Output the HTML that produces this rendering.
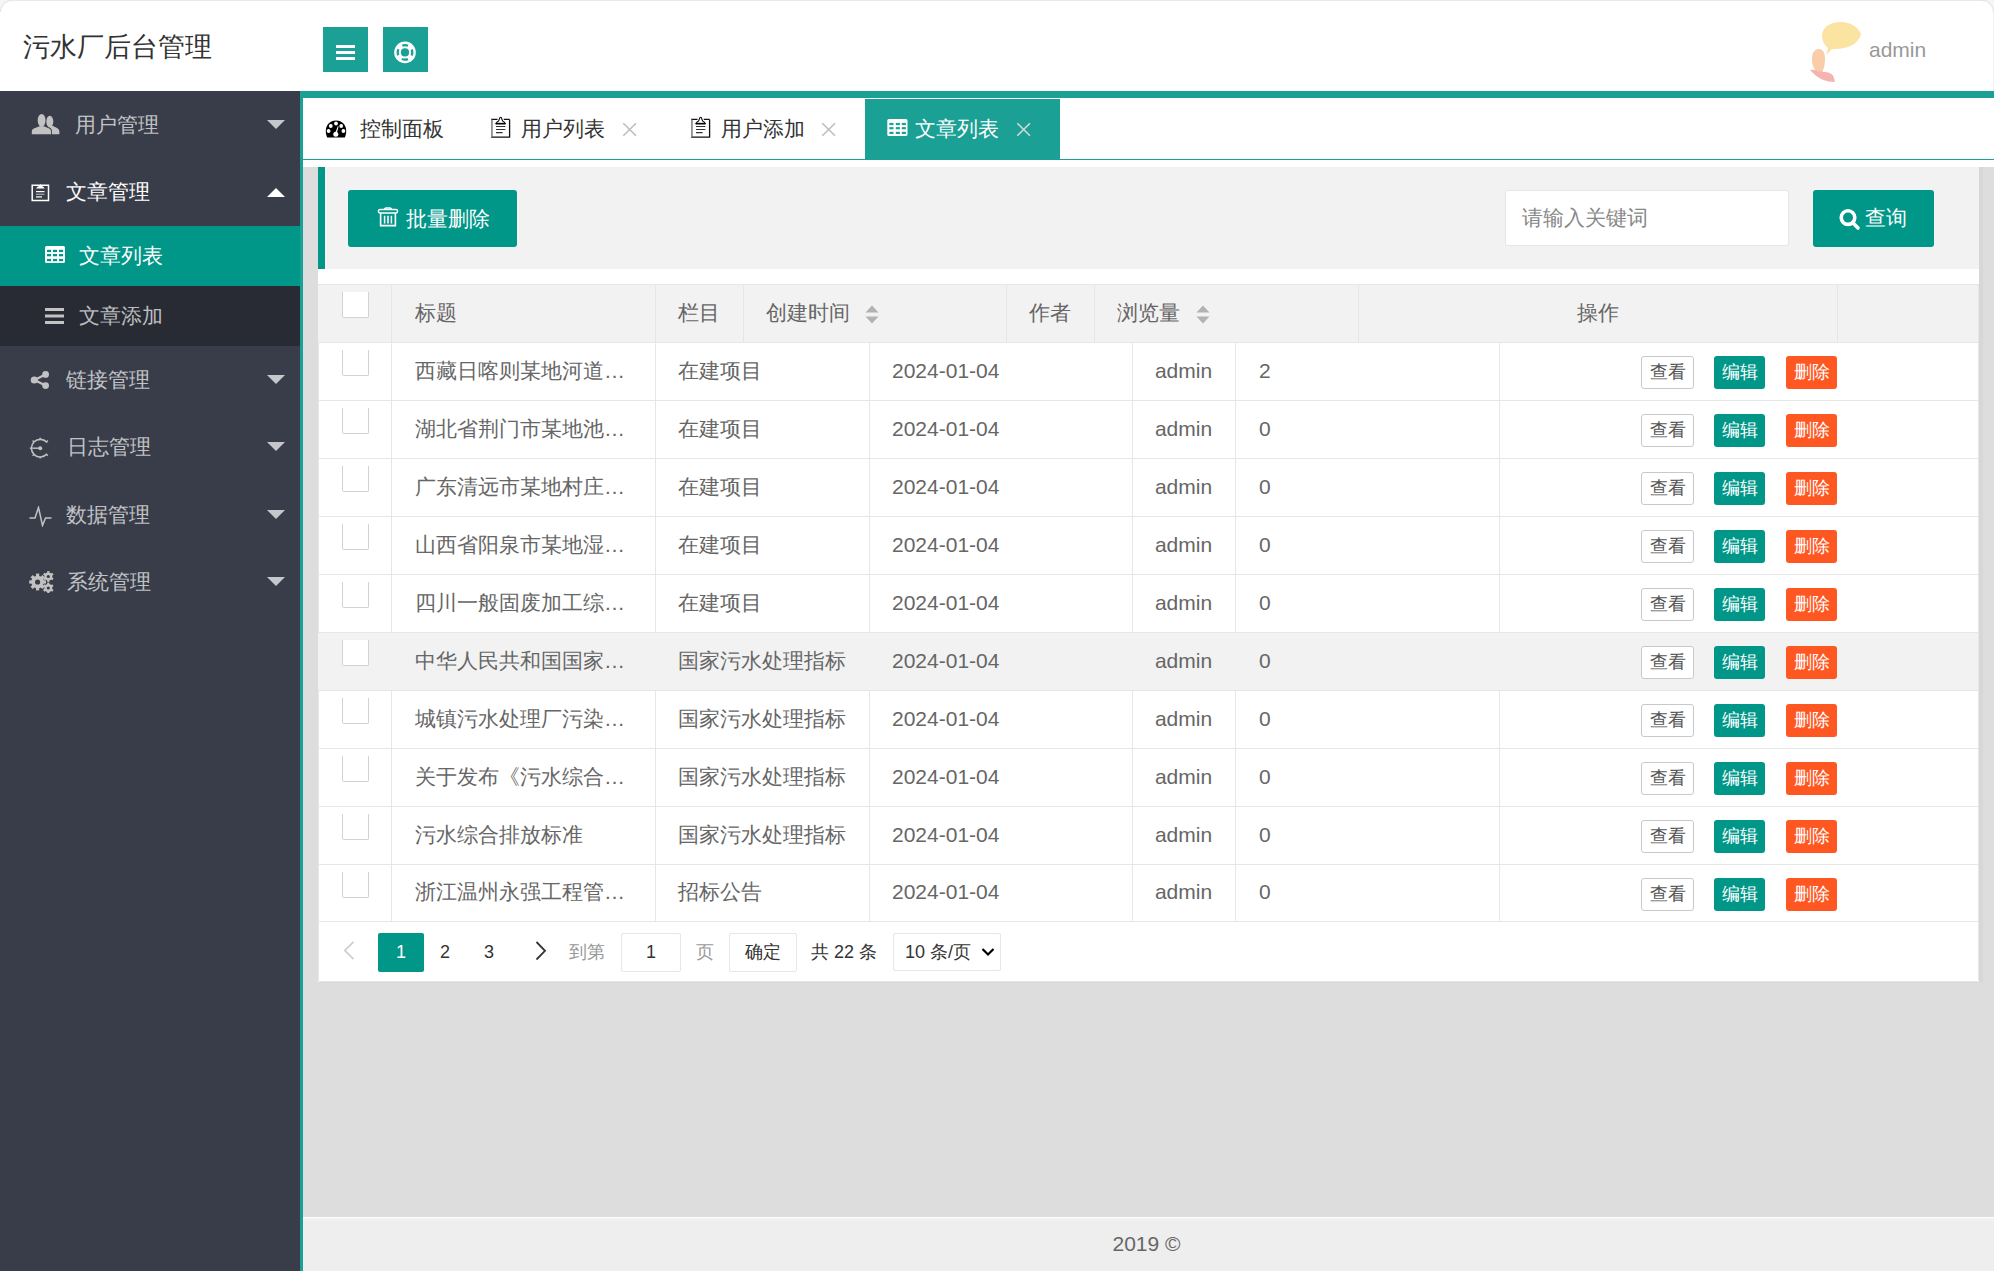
<!DOCTYPE html>
<html><head><meta charset="utf-8"><title>污水厂后台管理</title>
<style>
*{box-sizing:border-box;margin:0;padding:0}
html,body{width:1994px;height:1271px;overflow:hidden}
body{position:relative;background:#fff;font-family:"Liberation Sans",sans-serif;color:#666;font-size:21px}
.abs{position:absolute}
svg{display:block}
/* header */
#hd{left:0;top:0;width:1994px;height:91px;background:#fff}
#logo{left:23px;top:27px;font-size:27px;color:#333;line-height:40px;white-space:nowrap}
.hbtn{top:27px;width:45px;height:45px;background:#1AA094}
#admin{left:1869px;top:35px;font-size:21px;line-height:30px;color:#999}
/* side */
#side{left:0;top:91px;width:300px;height:1180px;background:#393D49}
.nv{position:absolute;left:0;width:300px;height:68px;color:rgba(255,255,255,.7);font-size:21px}
.nv .t{position:absolute;left:66px;top:0;line-height:68px;white-space:nowrap}
.nv .ic{position:absolute}
.nv .ar{position:absolute;left:267px;top:29px;width:0;height:0;border-left:9px solid transparent;border-right:9px solid transparent;border-top:9px solid #c6c7cc}
.nv .ar.up{border-top:0;border-bottom:9px solid #fff;top:30px}
/* main */
#main{left:300px;top:91px;width:1694px;height:1180px;background:#fff}
#tbar{left:300px;top:91px;width:1694px;height:7px;background:#1AA094}
#lbar{left:300px;top:91px;width:3px;height:1180px;background:#1AA094}
#tline{left:303px;top:159px;width:1691px;height:1px;background:#1AA094}
.tab{top:99px;height:60px;line-height:60px;font-size:21px;color:#333;white-space:nowrap}
.tab .x{position:absolute;top:0;color:#c2c2c2;font-size:20px}
#gray{left:303px;top:167px;width:1691px;height:1050px;background:#dddddd}
#foot{left:303px;top:1217px;width:1691px;height:54px;background:#eeeeee;border-top:1px solid #fff;box-shadow:inset 0 3px 0 #f2f2f2}
#foot span{position:absolute;left:-2px;width:100%;text-align:center;top:14px;line-height:24px;font-size:21px;color:#666}
#quote{left:318px;top:167px;width:1661px;height:102px;background:#f2f2f2;border-left:7px solid #009688}
#white{left:318px;top:269px;width:1661px;height:713px;background:#fff}
#tview{left:318px;top:284px;width:1661px;height:698px;border:1px solid #e6e6e6;border-top:0;border-radius:0 0 2px 2px}
.btn{background:#009688;color:#fff;border-radius:3px;white-space:nowrap}
#inp{left:1505px;top:190px;width:284px;height:56px;background:#fff;border:1px solid #e6e6e6;border-radius:3px}
#inp span{position:absolute;left:16px;top:0;line-height:54px;color:#888;font-size:21px}
/* table */
#thead{left:318px;top:284px;width:1660px;height:59px;background:#f2f2f2;border-top:1px solid #e6e6e6;border-bottom:1px solid #e6e6e6}
.vl{position:absolute;width:1px;background:#e6e6e6}
.hl{position:absolute;left:318px;width:1660px;height:1px;background:#e6e6e6}
.cell{position:absolute;line-height:58px;font-size:21px;color:#666;white-space:nowrap}
.cb{position:absolute;left:342px;width:27px;height:26px;background:#fff;border:1px solid #d2d2d2;border-top:0;border-radius:0 0 2px 2px}
.xs{position:absolute;height:33px;line-height:31px;font-size:18px;border-radius:3px;text-align:center;white-space:nowrap}
.xs.v{left:1641px;width:53px;background:#fff;border:1px solid #c9c9c9;color:#555}
.xs.e{left:1714px;width:51px;background:#009688;color:#fff;line-height:33px}
.xs.d{left:1786px;width:51px;background:#FF5722;color:#fff;line-height:33px}
.pg{position:absolute;top:933px;height:38px;line-height:38px;font-size:18px;white-space:nowrap;color:#333}
</style></head>
<body>
<div id="hd" class="abs"></div>
<div id="logo" class="abs">污水厂后台管理</div>
<div class="abs hbtn" style="left:323px">
 <svg width="45" height="45"><rect x="13" y="18" width="19" height="3" fill="#fff"/><rect x="13" y="24" width="19" height="3" fill="#fff"/><rect x="13" y="30" width="19" height="3" fill="#fff"/></svg>
</div>
<div class="abs hbtn" style="left:383px">
 <svg width="45" height="45"><circle cx="22" cy="25.4" r="10.8" fill="#fff"/><circle cx="22" cy="25.4" r="7.3" fill="none" stroke="#1AA094" stroke-width="2.3" stroke-dasharray="6.2 5.27" stroke-dashoffset="3.1" transform="rotate(-90 22 25.4)"/><circle cx="22" cy="25.4" r="4.1" fill="#1AA094"/></svg>
</div>
<div class="abs" style="left:1806px;top:18px">
 <svg width="60" height="68" viewBox="0 0 60 68"><path d="M16 18 C16 8 26 4 35 4 C45 4 52 9 55 16 C54 21 50 26 42 29 C35 31 30 31 26 31 L20 37 L22 30 C18 27 16 23 16 18Z" fill="#fbe3a1"/><path d="M6 41 C6 33 10 31 13 31 C17 31 19 35 19 41 C19 46 18 50 17 52 L17 56 L9 56 L9 52 C7 49 6 45 6 41Z" fill="#f9ccaa"/><path d="M4 52 C8 51 12 54 17 54 C22 54 27 55 28 60 L29 64 C20 64 12 61 4 52Z" fill="#f4b4b0"/></svg>
</div>
<div id="admin" class="abs">admin</div>

<div id="side" class="abs"></div>
<!-- nav items -->
<div class="nv" style="top:91px">
 <svg class="ic" style="left:31px;top:22px" width="30" height="22" viewBox="0 0 30 22"><g fill="#c2c2c2"><ellipse cx="18.8" cy="8.6" rx="3.5" ry="5.8"/><path d="M20.6 21.2 V17.6 Q20.6 15.8 18.6 15 L17.4 14.3 L19.6 13 H22 L25.6 14.8 Q28.4 15.8 28.4 18.6 V21.2 Z"/></g><path d="M20.2 21.5 V17.6 Q20.2 15.2 17.5 14.4" fill="none" stroke="#393D49" stroke-width="1"/><g fill="#c2c2c2"><ellipse cx="10.6" cy="7.4" rx="3.9" ry="6.4"/><path d="M0.8 21.2 V18.6 Q0.9 15.6 4.2 14.9 L8.4 13.2 H12.8 L17 14.9 Q19.9 15.6 20 18.6 V21.2 Z"/></g></svg>
 <span class="t" style="left:75px">用户管理</span>
 <span class="ar"></span>
</div>
<div class="nv" style="top:158px;color:#fff">
 <svg class="ic" style="left:31px;top:25px" width="19" height="19" viewBox="0 0 19 19"><path d="M1.2 2.2 H17.5 V17.6 H1.2 Z" fill="none" stroke="#fff" stroke-width="1.5"/><path d="M5 5.5 L7 3.2 H8.2 L9.4 1 L10.6 3.2 H11.8 L13.8 5.5Z" fill="#fff"/><rect x="5" y="8" width="8.5" height="1.2" fill="#fff"/><rect x="5" y="10.7" width="8.5" height="1.2" fill="#aaa"/><rect x="5" y="13.3" width="6" height="1.2" fill="#fff"/></svg>
 <span class="t">文章管理</span>
 <span class="ar up"></span>
</div>
<div class="nv" style="top:226px;height:60px;background:#009688;color:#fff">
 <svg class="ic" style="left:45px;top:20px" width="20" height="18" viewBox="0 0 20 18"><rect x="0" y="0" width="20" height="17" rx="1.6" fill="#fff"/><g fill="#009688"><rect x="2" y="3.8" width="4.1" height="2.3"/><rect x="8" y="3.8" width="4.1" height="2.3"/><rect x="14" y="3.8" width="4.1" height="2.3"/><rect x="2" y="8.0" width="4.1" height="2.3"/><rect x="8" y="8.0" width="4.1" height="2.3"/><rect x="14" y="8.0" width="4.1" height="2.3"/><rect x="2" y="12.9" width="4.1" height="2.3"/><rect x="8" y="12.9" width="4.1" height="2.3"/><rect x="14" y="12.9" width="4.1" height="2.3"/></g></svg>
 <span class="t" style="left:79px;line-height:60px">文章列表</span>
</div>
<div class="nv" style="top:286px;height:60px;background:#282B33">
 <svg class="ic" style="left:45px;top:21px" width="19" height="18" viewBox="0 0 19 18"><rect x="0" y="1" width="19" height="3" fill="#c2c2c2"/><rect x="0" y="7.5" width="19" height="3" fill="#c2c2c2"/><rect x="0" y="14" width="19" height="3" fill="#c2c2c2"/></svg>
 <span class="t" style="left:79px;line-height:60px">文章添加</span>
</div>
<div class="nv" style="top:346px">
 <svg class="ic" style="left:29px;top:24px" width="22" height="20" viewBox="0 0 22 20"><path d="M5.5 10 L16.5 4.5 M5.5 10 L16.5 15.5" stroke="#c2c2c2" stroke-width="2.4"/><circle cx="5.3" cy="10" r="3.6" fill="#c2c2c2"/><circle cx="16.6" cy="4.4" r="3.4" fill="#c2c2c2"/><circle cx="16.6" cy="15.6" r="3.4" fill="#c2c2c2"/></svg>
 <span class="t">链接管理</span>
 <span class="ar"></span>
</div>
<div class="nv" style="top:413px">
 <svg class="ic" style="left:29px;top:24px" width="23" height="23" viewBox="0 0 23 23"><path d="M18 5.6 A8.8 8.8 0 1 0 18 16.8" fill="none" stroke="#c2c2c2" stroke-width="1.6"/><circle cx="11.2" cy="11.2" r="2" fill="#c2c2c2"/><path d="M3.2 11.2 H11" stroke="#c2c2c2" stroke-width="1.4"/><g stroke="#c2c2c2" stroke-width="1.4"><path d="M11.2 0.8 V2.6"/><path d="M11.2 19.8 V21.6"/><path d="M3.6 3.6 L4.9 4.9"/><path d="M3.6 18.8 L4.9 17.5"/><path d="M0.8 11.2 H2.6"/><path d="M18.8 3.6 L17.5 4.9"/><path d="M18.8 18.8 L17.5 17.5"/></g></svg>
 <span class="t" style="left:67px">日志管理</span>
 <span class="ar"></span>
</div>
<div class="nv" style="top:481px">
 <svg class="ic" style="left:29px;top:25px" width="23" height="21" viewBox="0 0 23 21"><path d="M0.5 12 H6 L9.5 1.5 L13.5 19.5 L16.5 12 H22.5" fill="none" stroke="#c2c2c2" stroke-width="1.5" stroke-linejoin="miter"/></svg>
 <span class="t">数据管理</span>
 <span class="ar"></span>
</div>
<div class="nv" style="top:548px">
 <svg class="ic" style="left:29px;top:21px" width="25" height="24" viewBox="0 0 25 24"><g fill="#c2c2c2"><circle cx="8.6" cy="13" r="6.3"/><g transform="translate(8.6 13)"><rect x="-1.6" y="-8.4" width="3.2" height="16.8"/><rect x="-1.6" y="-8.4" width="3.2" height="16.8" transform="rotate(45)"/><rect x="-1.6" y="-8.4" width="3.2" height="16.8" transform="rotate(90)"/><rect x="-1.6" y="-8.4" width="3.2" height="16.8" transform="rotate(135)"/></g><circle cx="19.3" cy="7.5" r="4"/><g transform="translate(19.3 7.5)"><rect x="-1.1" y="-5.4" width="2.2" height="10.8"/><rect x="-1.1" y="-5.4" width="2.2" height="10.8" transform="rotate(60)"/><rect x="-1.1" y="-5.4" width="2.2" height="10.8" transform="rotate(120)"/></g><circle cx="19.3" cy="19" r="4"/><g transform="translate(19.3 19)"><rect x="-1.1" y="-5.4" width="2.2" height="10.8"/><rect x="-1.1" y="-5.4" width="2.2" height="10.8" transform="rotate(60)"/><rect x="-1.1" y="-5.4" width="2.2" height="10.8" transform="rotate(120)"/></g></g><g fill="#393D49"><circle cx="8.6" cy="13" r="2.6"/><circle cx="19.3" cy="7.5" r="1.6"/><circle cx="19.3" cy="19" r="1.6"/></g></svg>
 <span class="t" style="left:67px">系统管理</span>
 <span class="ar"></span>
</div>

<div id="main" class="abs"></div>
<div id="tbar" class="abs"></div>
<div id="lbar" class="abs"></div>
<div id="tline" class="abs"></div>
<div class="abs" style="left:865px;top:99px;width:195px;height:60px;background:#1AA094"></div>
<!-- tabs -->
<svg class="abs" style="left:325px;top:120px" width="22" height="18" viewBox="0 0 22 18"><path d="M11 0.5 C5 0.5 0.8 5 0.8 11 C0.8 13.5 1.3 15.5 2.2 17.5 H19.8 C20.7 15.5 21.2 13.5 21.2 11 C21.2 5 17 0.5 11 0.5Z" fill="#000"/><g fill="#fff"><circle cx="11" cy="3.5" r="1.9"/><circle cx="5.8" cy="6" r="1.9"/><circle cx="16.2" cy="6" r="1.9"/><circle cx="3.6" cy="11" r="1.9"/><circle cx="18.4" cy="11" r="1.9"/><circle cx="10.8" cy="14.2" r="2.5"/><path d="M10 13.5 L12.8 6.3 L13.6 6.6 L11.6 14Z"/></g></svg>
<div class="tab abs" style="left:360px">控制面板</div>
<svg class="abs" style="left:491px;top:116px" width="20" height="22" viewBox="0 0 20 22"><path d="M18.6 3.4 V21.2 H0.7 V3.4 H6.5 M12.8 3.4 H18.6" fill="none" stroke="#111" stroke-width="1.3"/><path d="M0.7 3.4 V21.2" stroke="#999" stroke-width="1.3"/><path d="M5 7.6 Q5.6 5.9 7.6 5 L8.9 1.6 Q9.6 0.8 10.3 1.6 L11.6 5 Q13.6 5.9 14.2 7.6 Z" fill="#fff" stroke="#111" stroke-width="1.1" stroke-linejoin="round"/><path d="M4.6 7.6 H14.6" stroke="#000" stroke-width="1.5"/><path d="M5 10.5 H14.4 M5 13.5 H14.4 M5 16.6 H11.6" stroke="#333" stroke-width="1.2"/></svg>
<div class="tab abs" style="left:521px">用户列表</div>
<svg class="abs" style="left:622px;top:122px" width="15" height="15" viewBox="0 0 15 15"><path d="M1.3 1.3 L14 13.8 M14 1.3 L1.3 13.8" stroke="#bdbdbd" stroke-width="1.6"/></svg>
<svg class="abs" style="left:691px;top:116px" width="20" height="22" viewBox="0 0 20 22"><path d="M18.6 3.4 V21.2 H0.7 V3.4 H6.5 M12.8 3.4 H18.6" fill="none" stroke="#111" stroke-width="1.3"/><path d="M0.7 3.4 V21.2" stroke="#999" stroke-width="1.3"/><path d="M5 7.6 Q5.6 5.9 7.6 5 L8.9 1.6 Q9.6 0.8 10.3 1.6 L11.6 5 Q13.6 5.9 14.2 7.6 Z" fill="#fff" stroke="#111" stroke-width="1.1" stroke-linejoin="round"/><path d="M4.6 7.6 H14.6" stroke="#000" stroke-width="1.5"/><path d="M5 10.5 H14.4 M5 13.5 H14.4 M5 16.6 H11.6" stroke="#333" stroke-width="1.2"/></svg>
<div class="tab abs" style="left:721px">用户添加</div>
<svg class="abs" style="left:821px;top:122px" width="15" height="15" viewBox="0 0 15 15"><path d="M1.3 1.3 L14 13.8 M14 1.3 L1.3 13.8" stroke="#bdbdbd" stroke-width="1.6"/></svg>
<svg class="abs" style="left:887px;top:119px" width="21" height="17" viewBox="0 0 21 17"><rect x="0.3" y="0" width="20.2" height="17" rx="1.6" fill="#fff"/><g fill="#1AA094"><rect x="2.4" y="3.9" width="4.1" height="2.2"/><rect x="8.8" y="3.9" width="4.1" height="2.2"/><rect x="14.8" y="3.9" width="4.1" height="2.2"/><rect x="2.4" y="8.1" width="4.1" height="2.2"/><rect x="8.8" y="8.1" width="4.1" height="2.2"/><rect x="14.8" y="8.1" width="4.1" height="2.2"/><rect x="2.4" y="12.8" width="4.1" height="2.2"/><rect x="8.8" y="12.8" width="4.1" height="2.2"/><rect x="14.8" y="12.8" width="4.1" height="2.2"/></g></svg>
<div class="tab abs" style="left:915px;color:#fff">文章列表</div>
<svg class="abs" style="left:1016px;top:122px" width="15" height="15" viewBox="0 0 15 15"><path d="M1.3 1.3 L14 13.8 M14 1.3 L1.3 13.8" stroke="#d8d8d8" stroke-width="1.6"/></svg>

<div id="gray" class="abs"></div>
<div id="foot" class="abs"><span>2019 ©</span></div>
<div id="quote" class="abs"></div>
<div id="white" class="abs"></div>
<div id="tview" class="abs"></div>
<div class="abs" style="left:1979px;top:167px;width:4px;height:816px;background:#d7d7d7"></div>
<div class="abs" style="left:318px;top:982px;width:1665px;height:1px;background:#d9d9d9"></div>
<!-- toolbar -->
<div class="abs btn" style="left:348px;top:190px;width:169px;height:57px"></div>
<svg class="abs" style="left:377px;top:207px" width="22" height="22" viewBox="0 0 22 22"><path d="M7.5 2.2 Q7.8 1 9 1 H13 Q14.2 1 14.5 2.2" fill="none" stroke="#fff" stroke-width="1.3"/><rect x="1.4" y="2.6" width="19.2" height="3.4" rx="1.7" fill="none" stroke="#fff" stroke-width="1.5"/><path d="M3.6 6 V18.6 H18.4 V6" fill="none" stroke="#fff" stroke-width="1.6"/><path d="M7.6 8.8 V16.4 M11 8.8 V16.4 M14.4 8.8 V16.4" stroke="#fff" stroke-width="1.5"/></svg>
<div class="abs" style="left:406px;top:190px;line-height:57px;font-size:21px;color:#fff;white-space:nowrap">批量删除</div>
<div id="inp" class="abs"><span>请输入关键词</span></div>
<div class="abs btn" style="left:1813px;top:190px;width:121px;height:57px"></div>
<svg class="abs" style="left:1839px;top:208px" width="22" height="23" viewBox="0 0 22 23"><circle cx="9" cy="9.6" r="6.8" fill="none" stroke="#fff" stroke-width="3.6"/><path d="M13.6 14.4 L19 20" stroke="#fff" stroke-width="3.6" stroke-linecap="round"/></svg>
<div class="abs" style="left:1865px;top:189px;line-height:57px;font-size:21px;color:#fff;white-space:nowrap">查询</div>

<!-- table header -->
<div id="thead" class="abs"></div>
<div class="vl" style="left:391px;top:284px;height:637px"></div>
<div class="vl" style="left:655px;top:284px;height:637px"></div>
<div class="vl" style="left:743px;top:284px;height:58px"></div>
<div class="vl" style="left:1006px;top:284px;height:58px"></div>
<div class="vl" style="left:1094px;top:284px;height:58px"></div>
<div class="vl" style="left:1358px;top:284px;height:58px"></div>
<div class="vl" style="left:1837px;top:284px;height:58px"></div>
<div class="vl" style="left:869px;top:342px;height:579px"></div>
<div class="vl" style="left:1132px;top:342px;height:579px"></div>
<div class="vl" style="left:1235px;top:342px;height:579px"></div>
<div class="vl" style="left:1499px;top:342px;height:579px"></div>
<div class="cb" style="top:292px"></div>
<div class="cell" style="left:415px;top:284px">标题</div>
<div class="cell" style="left:678px;top:284px">栏目</div>
<div class="cell" style="left:766px;top:284px">创建时间</div>
<div class="cell" style="left:1029px;top:284px">作者</div>
<div class="cell" style="left:1117px;top:284px">浏览量</div>
<div class="cell" style="left:1577px;top:284px">操作</div>
<svg class="abs" style="left:864px;top:305px" width="16" height="19" viewBox="0 0 16 19"><path d="M8 0.5 L14.5 7.5 H1.5Z M8 18.5 L14.5 11.5 H1.5Z" fill="#b2b2b2"/></svg>
<svg class="abs" style="left:1195px;top:305px" width="16" height="19" viewBox="0 0 16 19"><path d="M8 0.5 L14.5 7.5 H1.5Z M8 18.5 L14.5 11.5 H1.5Z" fill="#b2b2b2"/></svg>
<div id="rows"><div class="hl" style="top:400px"></div>
<div class="cb" style="top:350px"></div>
<div class="cell" style="left:415px;top:342px;line-height:57px">西藏日喀则某地河道…</div>
<div class="cell" style="left:678px;top:342px;line-height:57px">在建项目</div>
<div class="cell" style="left:892px;top:342px;line-height:57px">2024-01-04</div>
<div class="cell" style="left:1132px;width:103px;text-align:center;top:342px;line-height:57px">admin</div>
<div class="cell" style="left:1259px;top:342px;line-height:57px">2</div>
<div class="xs v" style="top:356px">查看</div><div class="xs e" style="top:356px">编辑</div><div class="xs d" style="top:356px">删除</div>
<div class="hl" style="top:458px"></div>
<div class="cb" style="top:408px"></div>
<div class="cell" style="left:415px;top:400px;line-height:57px">湖北省荆门市某地池…</div>
<div class="cell" style="left:678px;top:400px;line-height:57px">在建项目</div>
<div class="cell" style="left:892px;top:400px;line-height:57px">2024-01-04</div>
<div class="cell" style="left:1132px;width:103px;text-align:center;top:400px;line-height:57px">admin</div>
<div class="cell" style="left:1259px;top:400px;line-height:57px">0</div>
<div class="xs v" style="top:414px">查看</div><div class="xs e" style="top:414px">编辑</div><div class="xs d" style="top:414px">删除</div>
<div class="hl" style="top:516px"></div>
<div class="cb" style="top:466px"></div>
<div class="cell" style="left:415px;top:458px;line-height:57px">广东清远市某地村庄…</div>
<div class="cell" style="left:678px;top:458px;line-height:57px">在建项目</div>
<div class="cell" style="left:892px;top:458px;line-height:57px">2024-01-04</div>
<div class="cell" style="left:1132px;width:103px;text-align:center;top:458px;line-height:57px">admin</div>
<div class="cell" style="left:1259px;top:458px;line-height:57px">0</div>
<div class="xs v" style="top:472px">查看</div><div class="xs e" style="top:472px">编辑</div><div class="xs d" style="top:472px">删除</div>
<div class="hl" style="top:574px"></div>
<div class="cb" style="top:524px"></div>
<div class="cell" style="left:415px;top:516px;line-height:57px">山西省阳泉市某地湿…</div>
<div class="cell" style="left:678px;top:516px;line-height:57px">在建项目</div>
<div class="cell" style="left:892px;top:516px;line-height:57px">2024-01-04</div>
<div class="cell" style="left:1132px;width:103px;text-align:center;top:516px;line-height:57px">admin</div>
<div class="cell" style="left:1259px;top:516px;line-height:57px">0</div>
<div class="xs v" style="top:530px">查看</div><div class="xs e" style="top:530px">编辑</div><div class="xs d" style="top:530px">删除</div>
<div class="hl" style="top:632px"></div>
<div class="cb" style="top:582px"></div>
<div class="cell" style="left:415px;top:574px;line-height:57px">四川一般固废加工综…</div>
<div class="cell" style="left:678px;top:574px;line-height:57px">在建项目</div>
<div class="cell" style="left:892px;top:574px;line-height:57px">2024-01-04</div>
<div class="cell" style="left:1132px;width:103px;text-align:center;top:574px;line-height:57px">admin</div>
<div class="cell" style="left:1259px;top:574px;line-height:57px">0</div>
<div class="xs v" style="top:588px">查看</div><div class="xs e" style="top:588px">编辑</div><div class="xs d" style="top:588px">删除</div>
<div class="abs" style="left:318px;top:633px;width:1660px;height:57px;background:#f2f2f2"></div>
<div class="hl" style="top:690px"></div>
<div class="cb" style="top:640px"></div>
<div class="cell" style="left:415px;top:632px;line-height:57px">中华人民共和国国家…</div>
<div class="cell" style="left:678px;top:632px;line-height:57px">国家污水处理指标</div>
<div class="cell" style="left:892px;top:632px;line-height:57px">2024-01-04</div>
<div class="cell" style="left:1132px;width:103px;text-align:center;top:632px;line-height:57px">admin</div>
<div class="cell" style="left:1259px;top:632px;line-height:57px">0</div>
<div class="xs v" style="top:646px">查看</div><div class="xs e" style="top:646px">编辑</div><div class="xs d" style="top:646px">删除</div>
<div class="hl" style="top:748px"></div>
<div class="cb" style="top:698px"></div>
<div class="cell" style="left:415px;top:690px;line-height:57px">城镇污水处理厂污染…</div>
<div class="cell" style="left:678px;top:690px;line-height:57px">国家污水处理指标</div>
<div class="cell" style="left:892px;top:690px;line-height:57px">2024-01-04</div>
<div class="cell" style="left:1132px;width:103px;text-align:center;top:690px;line-height:57px">admin</div>
<div class="cell" style="left:1259px;top:690px;line-height:57px">0</div>
<div class="xs v" style="top:704px">查看</div><div class="xs e" style="top:704px">编辑</div><div class="xs d" style="top:704px">删除</div>
<div class="hl" style="top:806px"></div>
<div class="cb" style="top:756px"></div>
<div class="cell" style="left:415px;top:748px;line-height:57px">关于发布《污水综合…</div>
<div class="cell" style="left:678px;top:748px;line-height:57px">国家污水处理指标</div>
<div class="cell" style="left:892px;top:748px;line-height:57px">2024-01-04</div>
<div class="cell" style="left:1132px;width:103px;text-align:center;top:748px;line-height:57px">admin</div>
<div class="cell" style="left:1259px;top:748px;line-height:57px">0</div>
<div class="xs v" style="top:762px">查看</div><div class="xs e" style="top:762px">编辑</div><div class="xs d" style="top:762px">删除</div>
<div class="hl" style="top:864px"></div>
<div class="cb" style="top:814px"></div>
<div class="cell" style="left:415px;top:806px;line-height:57px">污水综合排放标准</div>
<div class="cell" style="left:678px;top:806px;line-height:57px">国家污水处理指标</div>
<div class="cell" style="left:892px;top:806px;line-height:57px">2024-01-04</div>
<div class="cell" style="left:1132px;width:103px;text-align:center;top:806px;line-height:57px">admin</div>
<div class="cell" style="left:1259px;top:806px;line-height:57px">0</div>
<div class="xs v" style="top:820px">查看</div><div class="xs e" style="top:820px">编辑</div><div class="xs d" style="top:820px">删除</div>
<div class="hl" style="top:921px"></div>
<div class="cb" style="top:872px"></div>
<div class="cell" style="left:415px;top:864px;line-height:56px">浙江温州永强工程管…</div>
<div class="cell" style="left:678px;top:864px;line-height:56px">招标公告</div>
<div class="cell" style="left:892px;top:864px;line-height:56px">2024-01-04</div>
<div class="cell" style="left:1132px;width:103px;text-align:center;top:864px;line-height:56px">admin</div>
<div class="cell" style="left:1259px;top:864px;line-height:56px">0</div>
<div class="xs v" style="top:878px">查看</div><div class="xs e" style="top:878px">编辑</div><div class="xs d" style="top:878px">删除</div></div><!--/rows-->

<!-- pagination -->
<svg class="abs" style="left:343px;top:940px" width="14" height="22" viewBox="0 0 14 22"><path d="M10.5 1.8 L1.8 10.5 L10.5 19.2" fill="none" stroke="#cfcfcf" stroke-width="1.8"/></svg>
<div class="abs btn" style="left:378px;top:933px;width:46px;height:39px;border-radius:2px"></div>
<div class="pg" style="left:378px;width:46px;text-align:center;color:#fff">1</div>
<div class="pg" style="left:422px;width:46px;text-align:center">2</div>
<div class="pg" style="left:466px;width:46px;text-align:center">3</div>
<svg class="abs" style="left:534px;top:940px" width="14" height="22" viewBox="0 0 14 22"><path d="M2.5 2 L11 10.8 L2.5 19.5" fill="none" stroke="#333" stroke-width="1.8"/></svg>
<div class="pg" style="left:569px;color:#999">到第</div>
<div class="abs" style="left:621px;top:933px;width:60px;height:39px;border:1px solid #e6e6e6;border-radius:2px;background:#fff"></div>
<div class="pg" style="left:621px;width:60px;text-align:center">1</div>
<div class="pg" style="left:696px;color:#999">页</div>
<div class="abs" style="left:729px;top:933px;width:68px;height:39px;border:1px solid #e6e6e6;border-radius:2px;background:#fff"></div>
<div class="pg" style="left:729px;width:68px;text-align:center">确定</div>
<div class="pg" style="left:811px">共 22 条</div>
<div class="abs" style="left:893px;top:933px;width:108px;height:38px;border:1px solid #e6e6e6;border-radius:2px;background:#fff"></div>
<div class="pg" style="left:905px">10 条/页</div>
<svg class="abs" style="left:981px;top:946px" width="14" height="12" viewBox="0 0 14 12"><path d="M1.5 3 L7 8.5 L12.5 3" fill="none" stroke="#000" stroke-width="2.2"/></svg>
<div class="abs" style="left:0;top:0;width:1994px;height:1px;background:#e9e9e9"></div>
<svg class="abs" style="left:0;top:0" width="14" height="14" viewBox="0 0 14 14"><path d="M0 0 H12 A12 12 0 0 0 0 12 Z" fill="#f5f5f5"/><path d="M12 0.5 A11.5 11.5 0 0 0 0.5 12" fill="none" stroke="#e4e4e4" stroke-width="1.2"/></svg>
<svg class="abs" style="left:1980px;top:0" width="14" height="14" viewBox="0 0 14 14"><path d="M14 0 H2 A12 12 0 0 1 14 12 Z" fill="#f5f5f5"/><path d="M2 0.5 A11.5 11.5 0 0 1 13.5 12" fill="none" stroke="#e4e4e4" stroke-width="1.2"/></svg>
<div class="abs" style="left:1993px;top:12px;width:1px;height:79px;background:#f2f2f2"></div>
</body></html>
